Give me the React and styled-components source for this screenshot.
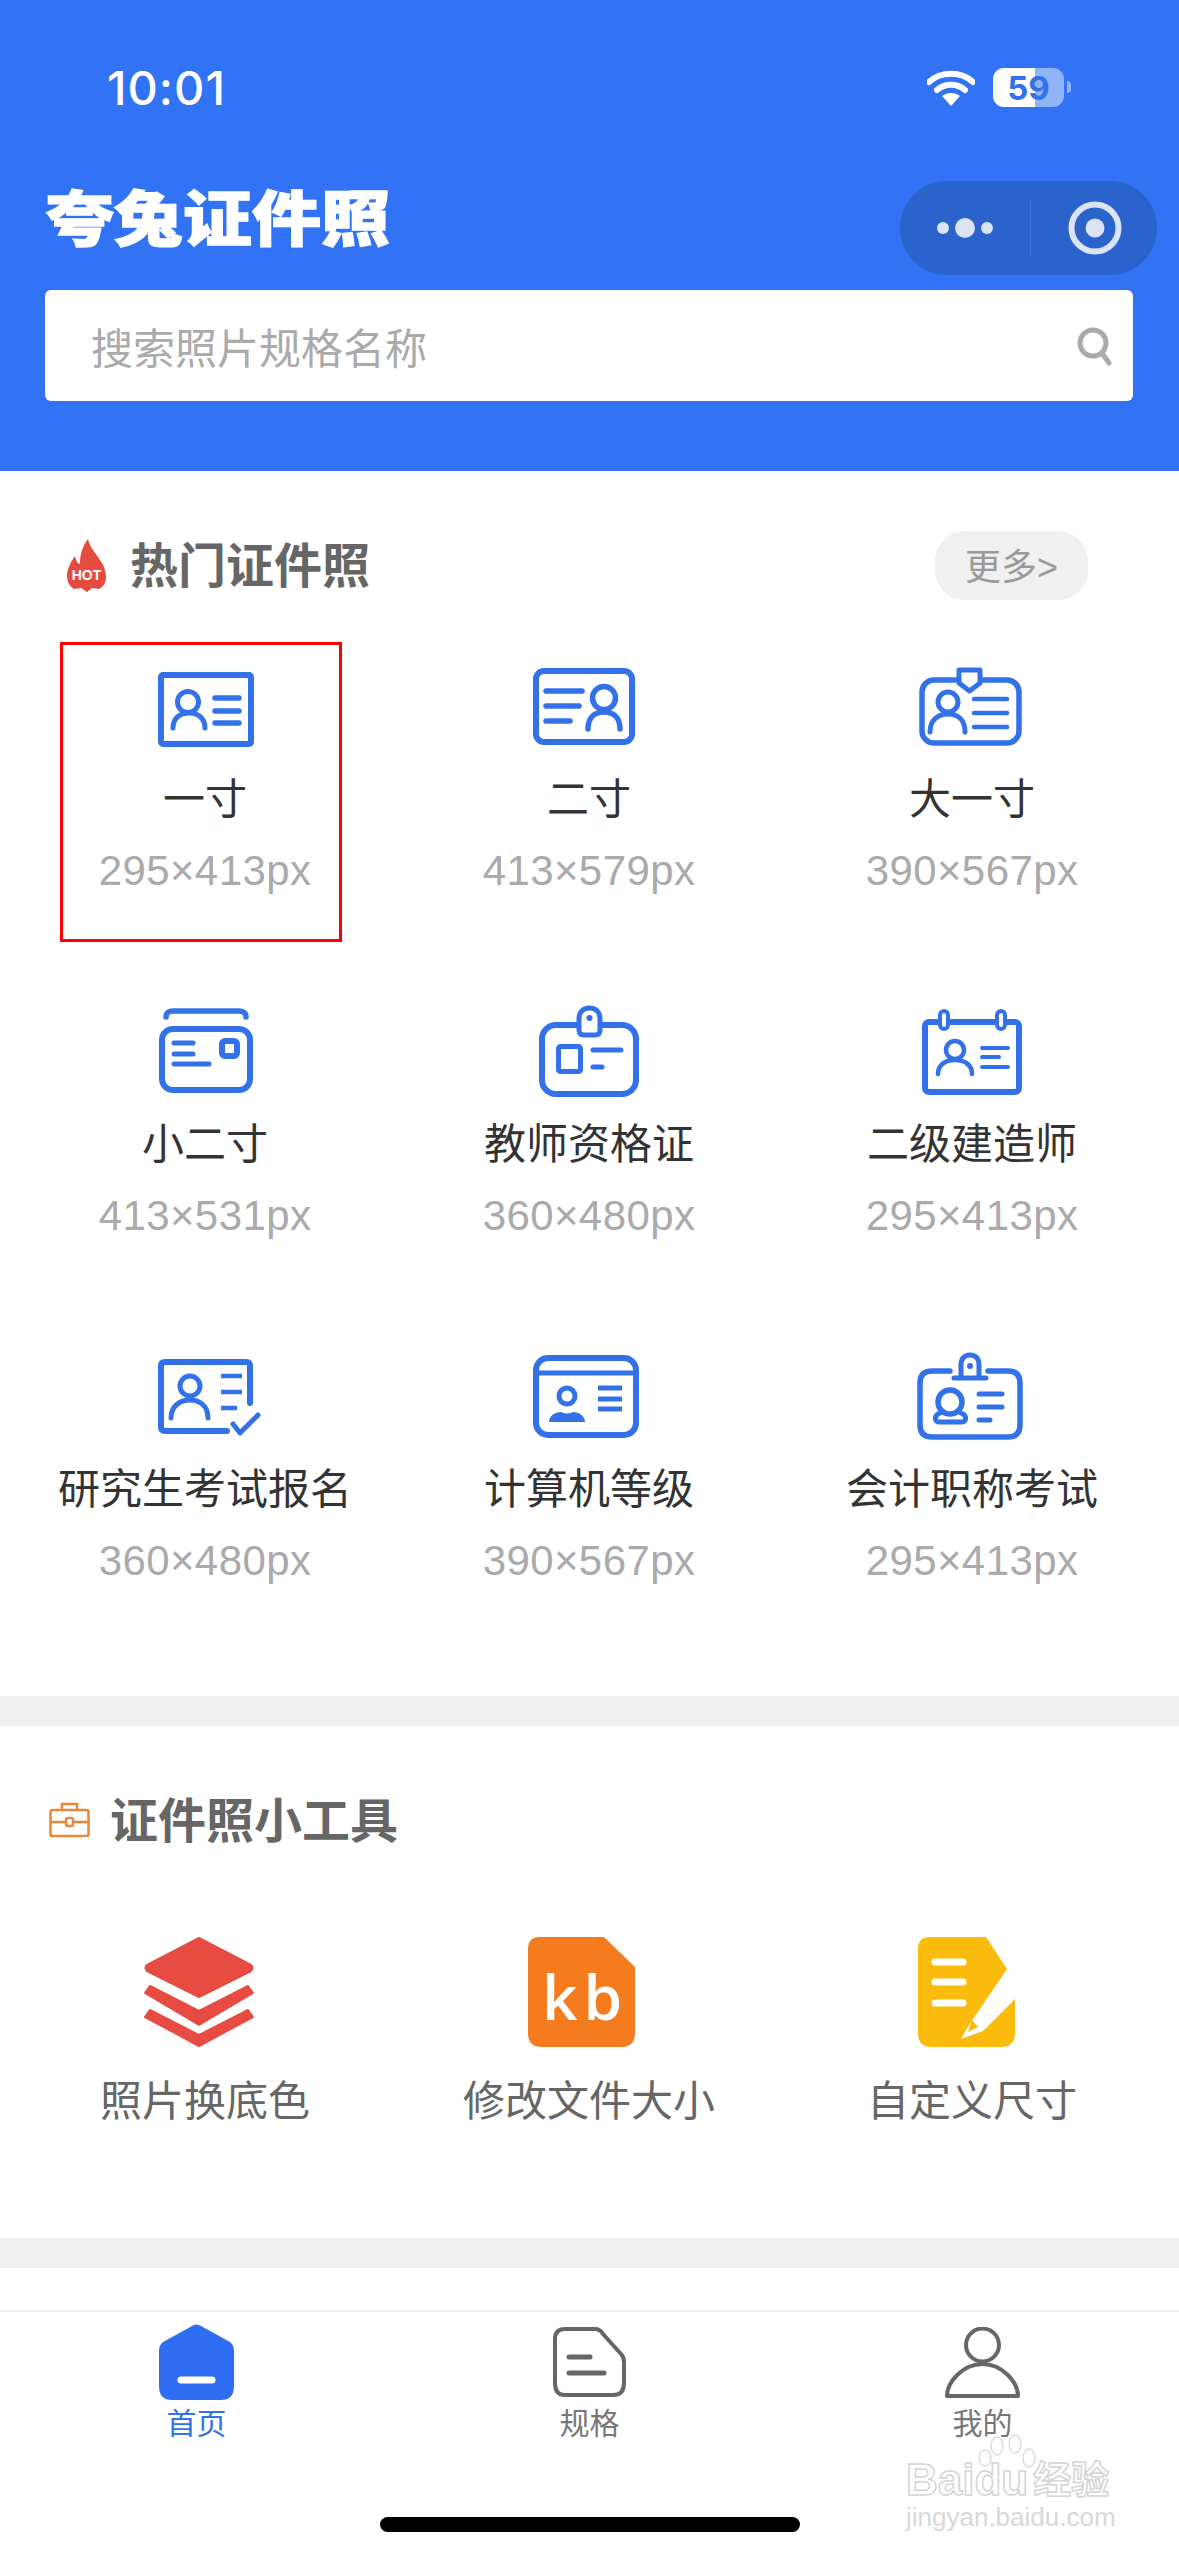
import React from 'react'
import styled, { createGlobalStyle } from 'styled-components'

const BLUE = '#3271e8'

const GlobalStyle = createGlobalStyle`
  html, body {
    margin: 0;
    padding: 0;
    background: #fff;
    font-family: "Liberation Sans", "Noto Sans CJK SC", sans-serif;
  }
`

const Page = styled.div`
  position: relative;
  width: 1179px;
  height: 2556px;
  overflow: hidden;
  background: #fff;
  display: flex;
  flex-direction: column;
`

const Header = styled.header`
  height: 471px;
  flex: none;
  background: #3273f5;
  box-sizing: border-box;
`

const StatusBar = styled.div`
  height: 181px;
  box-sizing: border-box;
  padding: 56px 115px 0 107px;
  display: flex;
  justify-content: space-between;
  align-items: flex-start;
`

const Time = styled.span`
  font-family: Inter, sans-serif;
  font-size: 47px;
  line-height: 64px;
  font-weight: 500;
  letter-spacing: 1px;
  color: #fff;
`

const StatusIcons = styled.div`
  display: flex;
  align-items: center;
  gap: 18px;
  padding-top: 12px;
`

const Battery = styled.div`
  position: relative;
  width: 71px;
  height: 39px;
  border-radius: 11px;
  background: linear-gradient(90deg, #fff 0 42px, #8fb4f8 42px 71px);
  display: flex;
  align-items: center;
  justify-content: center;
  font-family: Inter, sans-serif;
  font-weight: 700;
  font-size: 33px;
  color: ${BLUE};

  &::after {
    content: '';
    position: absolute;
    right: -7px;
    top: 13px;
    width: 4px;
    height: 12px;
    border-radius: 0 6px 6px 0;
    background: #8fb4f8;
  }
`

const TitleRow = styled.div`
  height: 94px;
  display: flex;
  justify-content: space-between;
  align-items: center;
  padding: 0 22px 0 45px;
`

const AppTitle = styled.h1`
  margin: 0 0 14px;
  font-size: 69px;
  line-height: 80px;
  font-weight: 900;
  color: #fff;
  -webkit-text-stroke: 1.5px #fff;
  transform: scaleY(0.88);
`

const Capsule = styled.div`
  width: 257px;
  height: 94px;
  border-radius: 47px;
  background: #2a63cc;
  display: flex;
  align-items: center;
`

const CapsuleSide = styled.div`
  flex: 1;
  height: 56px;
  display: flex;
  align-items: center;
  justify-content: center;
  padding-left: ${({ $shift }) => $shift}px;
  border-left: ${({ $divided }) => ($divided ? '1px solid #3d74d6' : 'none')};
`

const SearchBox = styled.div`
  height: 111px;
  margin: 15px 46px 0 45px;
  padding: 0 20px 0 46px;
  box-sizing: border-box;
  background: #fff;
  border-radius: 6px;
  display: flex;
  align-items: center;
  justify-content: space-between;
`

const Placeholder = styled.span`
  font-size: 42px;
  color: #aaa;
`

const Section = styled.section`
  flex: none;
  background: #fff;
  box-sizing: border-box;
  height: ${({ $height }) => $height}px;
  padding-top: ${({ $top }) => $top}px;
`

const SectionHead = styled.div`
  height: ${({ $tall }) => ($tall ? 69 : 60)}px;
  display: flex;
  align-items: center;
  justify-content: space-between;
  padding: 0 91px 0 ${({ $inset }) => $inset}px;
`

const SectionTitle = styled.div`
  display: flex;
  align-items: center;
  gap: ${({ $gap }) => $gap}px;
`

const TitleText = styled.span`
  margin-bottom: 7px;
  font-size: 48px;
  font-weight: 700;
  color: #666;
`

const MoreButton = styled.div`
  width: 153px;
  height: 69px;
  padding-bottom: 3px;
  box-sizing: border-box;
  border-radius: 30px;
  background: #f0f0f0;
  display: flex;
  align-items: center;
  justify-content: center;
  font-size: 36px;
  color: #999;
`

const ThreeColumns = styled.div`
  display: grid;
  grid-template-columns: 384px 384px 382px;
  padding: 0 16px 0 13px;
`

const SizeGrid = styled(ThreeColumns)`
  grid-auto-rows: 345px;
  margin-top: 57px;
`

const SizeCell = styled.div`
  position: relative;
  display: flex;
  flex-direction: column;
  align-items: center;
`

const Marker = styled.div`
  position: absolute;
  left: 47px;
  top: -15px;
  width: 282px;
  height: 300px;
  box-sizing: border-box;
  border: 3px solid #f00;
`

const IconSlot = styled.svg`
  display: block;
  flex: none;
  width: 120px;
  height: 100px;
  fill: none;
  stroke: ${BLUE};
  stroke-linecap: round;
  stroke-linejoin: round;
`

const CellName = styled.div`
  margin-top: 13px;
  font-size: 42px;
  line-height: 60px;
  color: #333;
  white-space: nowrap;
`

const CellSize = styled.div`
  margin-top: 16px;
  font-size: 42px;
  line-height: 50px;
  letter-spacing: 0.4px;
  color: #aaa;
  white-space: nowrap;
`

const Gap = styled.div`
  flex: none;
  height: 30px;
  background: #f0f0f0;
`

const ToolRow = styled(ThreeColumns)`
  margin-top: 87px;
`

const Tool = styled.div`
  display: flex;
  flex-direction: column;
  align-items: center;
`

const ToolSlot = styled.svg`
  display: block;
  width: 130px;
  height: 110px;
  overflow: visible;
`

const ToolName = styled.div`
  margin-top: 25px;
  font-size: 42px;
  line-height: 60px;
  color: #666;
  white-space: nowrap;
`

const Spacer = styled.div`
  flex: none;
  height: 42px;
`

const TabBar = styled.nav`
  flex: 1;
  border-top: 2px solid #eee;
  display: flex;
  align-items: flex-start;
`

const TabItem = styled.div`
  flex: 1;
  padding-top: 12px;
  display: flex;
  flex-direction: column;
  align-items: center;
`

const TabSlot = styled.div`
  height: 76px;
  display: flex;
  align-items: center;
  justify-content: center;
`

const TabLabel = styled.div`
  margin-top: 4px;
  font-size: 30px;
  line-height: 40px;
  color: ${({ $active }) => ($active ? BLUE : '#777')};
`

const HomeBar = styled.div`
  position: absolute;
  left: 380px;
  bottom: 24px;
  width: 420px;
  height: 15px;
  border-radius: 8px;
  background: #000;
`

const Watermark = styled.div`
  position: absolute;
  left: 906px;
  top: 2432px;
  width: 212px;
  height: 100px;
`

const WatermarkPaw = styled.svg`
  position: absolute;
  left: 71px;
  top: 0;
`

const WatermarkLogo = styled.div`
  position: absolute;
  left: 0;
  top: 26px;
  display: flex;
  align-items: center;
  gap: 5px;
  font-size: 44px;
  line-height: 44px;
  font-weight: 700;
  color: #fff;
  -webkit-text-stroke: 1.5px #d4d4d4;
  white-space: nowrap;
`

const WatermarkCn = styled.span`
  font-size: 38px;
`

const WatermarkUrl = styled.div`
  position: absolute;
  left: 0;
  top: 70px;
  font-size: 26px;
  line-height: 30px;
  color: #d8d8d8;
  white-space: nowrap;
`

const Line = ({ x1, x2, y, w }) => <line x1={x1} x2={x2} y1={y} y2={y} strokeWidth={w} />

const OneInch = () => (
  <IconSlot viewBox="0 0 120 100">
    <rect x="16" y="18" width="90" height="69" rx="2" strokeWidth="6" />
    <circle cx="43" cy="45" r="10.5" strokeWidth="5" />
    <path d="M28 71C28 61 35 56 44 56S60 61 60 71" strokeWidth="5" />
    <Line x1="70" x2="94" y="41" w="5.5" />
    <Line x1="70" x2="94" y="54" w="5.5" />
    <Line x1="70" x2="94" y="66" w="5.5" />
  </IconSlot>
)

const TwoInch = () => (
  <IconSlot viewBox="0 0 120 100">
    <rect x="7" y="14" width="96" height="71" rx="8" strokeWidth="6" />
    <Line x1="17" x2="53" y="34" w="5.5" />
    <Line x1="17" x2="50" y="49" w="5.5" />
    <Line x1="17" x2="41" y="64" w="5.5" />
    <circle cx="75" cy="41" r="11.5" strokeWidth="5.5" />
    <path d="M59 72C59 60 66 55 75 55S91 60 91 72" strokeWidth="5.5" />
  </IconSlot>
)

const BigOneInch = () => (
  <IconSlot viewBox="0 0 120 100">
    <rect x="10" y="23" width="97" height="63" rx="12" strokeWidth="5.5" />
    <path d="M47 13H68V26L57.5 34L47 26Z" fill="#fff" strokeWidth="5" />
    <circle cx="36" cy="45" r="10" strokeWidth="5" />
    <path d="M18 75C18 63 26 57 36 57S53 63 53 75" strokeWidth="5" />
    <Line x1="62" x2="95" y="42" w="4.5" />
    <Line x1="62" x2="95" y="56" w="4.5" />
    <Line x1="62" x2="95" y="70" w="4.5" />
  </IconSlot>
)

const SmallTwoInch = () => (
  <IconSlot viewBox="0 0 120 100">
    <path d="M21 15C21 11 24 9 28 9H94C98 9 101 11 101 15" strokeWidth="5.5" />
    <rect x="17" y="27" width="88" height="61" rx="11" strokeWidth="6" />
    <Line x1="29" x2="48" y="41" w="5" />
    <Line x1="29" x2="48" y="52" w="5" />
    <Line x1="29" x2="64" y="62" w="5" />
    <rect x="77" y="39" width="15" height="15" rx="3" strokeWidth="6" />
  </IconSlot>
)

const Teacher = () => (
  <IconSlot viewBox="0 0 120 100">
    <rect x="13" y="23" width="94" height="69" rx="14" strokeWidth="6" />
    <path d="M50 17C50 10 54 6 60.5 6S71 10 71 17V28Q71 33 66 33H55Q50 33 50 28Z" fill="#fff" strokeWidth="5" />
    <circle cx="60.5" cy="16" r="3" fill={BLUE} stroke="none" />
    <rect x="29.5" y="44.5" width="22" height="25" rx="2" strokeWidth="5" />
    <Line x1="64" x2="92" y="48" w="5" />
    <Line x1="64" x2="73" y="65" w="5" />
  </IconSlot>
)

const Builder = () => (
  <IconSlot viewBox="0 0 120 100">
    <rect x="13" y="20" width="94" height="70" rx="4" strokeWidth="6" />
    <rect x="28" y="9" width="8" height="18" rx="4" fill="#fff" strokeWidth="4" />
    <rect x="85" y="9" width="8" height="18" rx="4" fill="#fff" strokeWidth="4" />
    <circle cx="43" cy="48" r="9" strokeWidth="4.5" />
    <path d="M26 72C26 63 33 58 43 58S60 63 60 72" strokeWidth="4.5" />
    <Line x1="70" x2="96" y="46" w="4" />
    <Line x1="70" x2="87" y="55" w="4" />
    <Line x1="70" x2="96" y="65" w="4" />
  </IconSlot>
)

const Graduate = () => (
  <IconSlot viewBox="0 0 120 100">
    <path d="M105 56V19Q105 15 101 15H20Q16 15 16 19V80Q16 84 20 84H82" strokeWidth="6" />
    <circle cx="45" cy="39" r="10" strokeWidth="5" />
    <path d="M26 71C26 59 35 53 45 53S63 59 63 71" strokeWidth="5" />
    <line x1="76" x2="97" y1="29" y2="29" strokeWidth="4.5" strokeLinecap="butt" />
    <line x1="76" x2="97" y1="45" y2="45" strokeWidth="4.5" strokeLinecap="butt" />
    <line x1="76" x2="92" y1="61" y2="61" strokeWidth="4.5" strokeLinecap="butt" />
    <path d="M88 77L95 86L113 68" strokeWidth="5" />
  </IconSlot>
)

const Computer = () => (
  <IconSlot viewBox="0 0 120 100">
    <rect x="7" y="11" width="100" height="77" rx="12" strokeWidth="6" />
    <line x1="7" x2="107" y1="26" y2="26" strokeWidth="5" />
    <circle cx="38" cy="49" r="8" strokeWidth="5" />
    <path d="M20 75C20 69 26 65 32 65Q38 68 44 65C50 65 56 69 56 75Z" fill={BLUE} stroke="none" />
    <line x1="69" x2="93" y1="41" y2="41" strokeWidth="5" strokeLinecap="butt" />
    <line x1="69" x2="93" y1="52" y2="52" strokeWidth="5" strokeLinecap="butt" />
    <line x1="69" x2="93" y1="62" y2="62" strokeWidth="5" strokeLinecap="butt" />
  </IconSlot>
)

const Accountant = () => (
  <IconSlot viewBox="0 0 120 100">
    <path d="M38 24H20Q8 24 8 36V78Q8 90 20 90H96Q108 90 108 78V36Q108 24 96 24H76" strokeWidth="5.5" />
    <path d="M49 30V18C49 12 52 8 58 8S67 12 67 18V30" strokeWidth="5" />
    <Line x1="42" x2="74" y="31" w="5" />
    <circle cx="58" cy="19" r="3" fill={BLUE} stroke="none" />
    <circle cx="38" cy="55" r="12" strokeWidth="5.5" />
    <path d="M28 66C22 68 22 75 27 75H50C55 75 55 68 49 66" strokeWidth="5" />
    <Line x1="67" x2="90" y="47" w="5" />
    <Line x1="67" x2="90" y="60" w="5" />
    <Line x1="67" x2="78" y="73" w="5" />
  </IconSlot>
)

const sizes = [
  { name: '一寸', size: '295×413px', Icon: OneInch, marked: true },
  { name: '二寸', size: '413×579px', Icon: TwoInch },
  { name: '大一寸', size: '390×567px', Icon: BigOneInch },
  { name: '小二寸', size: '413×531px', Icon: SmallTwoInch },
  { name: '教师资格证', size: '360×480px', Icon: Teacher },
  { name: '二级建造师', size: '295×413px', Icon: Builder },
  { name: '研究生考试报名', size: '360×480px', Icon: Graduate },
  { name: '计算机等级', size: '390×567px', Icon: Computer },
  { name: '会计职称考试', size: '295×413px', Icon: Accountant },
]

const Layers = () => (
  <ToolSlot viewBox="0 0 130 110">
    <g fill="#e64c42" stroke="#e64c42" strokeWidth="2" strokeLinejoin="round">
      <path d="M59 1L111 28Q114 31 111 34L59 60L7 34Q4 31 7 28Z" />
      <path d="M5 56L10 49L59 74L108 49L113 56L59 88Z" />
      <path d="M5 80L10 73L59 98L108 73L113 80L59 109Z" />
    </g>
  </ToolSlot>
)

const KbFile = () => (
  <ToolSlot viewBox="0 0 130 110">
    <path d="M16 0H80L111 30V96Q111 110 97 110H18Q4 110 4 96V12Q4 0 16 0Z" fill="#f47b1e" />
    <text x="18" y="83" fontFamily="'Open Sans', sans-serif" fontWeight="600" fontSize="62" letterSpacing="6" fill="#fff">kb</text>
  </ToolSlot>
)

const CustomSize = () => (
  <ToolSlot viewBox="0 0 130 110">
    <path d="M23 0H79L100 32L62 88L54 102L76 94L108 62V96Q108 110 94 110H25Q11 110 11 96V12Q11 0 23 0Z" fill="#fbbb0c" />
    <path d="M61 95L65 83L71 90Z" fill="#fbbb0c" />
    <g stroke="#fff" strokeWidth="7" strokeLinecap="round">
      <line x1="28" x2="56" y1="25" y2="25" />
      <line x1="28" x2="56" y1="45" y2="45" />
      <line x1="28" x2="56" y1="66" y2="66" />
    </g>
  </ToolSlot>
)

const tools = [
  { name: '照片换底色', Icon: Layers },
  { name: '修改文件大小', Icon: KbFile },
  { name: '自定义尺寸', Icon: CustomSize },
]

export default function App() {
  return (
    <Page>
      <GlobalStyle />
      <Header>
        <StatusBar>
          <Time>10:01</Time>
          <StatusIcons>
            <svg width="48" height="36" viewBox="0 0 48 36">
              <path d="M2 12C14 1 34 1 46 12" fill="none" stroke="#fff" strokeWidth="6" strokeLinecap="round" />
              <path d="M10 20C18 13 30 13 38 20" fill="none" stroke="#fff" strokeWidth="6" strokeLinecap="round" />
              <path d="M15 26C20 22 28 22 33 26L24 36Z" fill="#fff" />
            </svg>
            <Battery>59</Battery>
          </StatusIcons>
        </StatusBar>
        <TitleRow>
          <AppTitle>夸兔证件照</AppTitle>
          <Capsule>
            <CapsuleSide $shift={5}>
              <svg width="64" height="24" viewBox="0 0 64 24" fill="#dbe3f5">
                <circle cx="8" cy="12" r="6" />
                <circle cx="30" cy="12" r="10" />
                <circle cx="52" cy="12" r="6" />
              </svg>
            </CapsuleSide>
            <CapsuleSide $divided $shift={2}>
              <svg width="54" height="54" viewBox="0 0 54 54">
                <circle cx="27" cy="27" r="23.5" fill="none" stroke="#dbe3f5" strokeWidth="6" />
                <circle cx="27" cy="27" r="9.5" fill="#dbe3f5" />
              </svg>
            </CapsuleSide>
          </Capsule>
        </TitleRow>
        <SearchBox>
          <Placeholder>搜索照片规格名称</Placeholder>
          <svg width="38" height="40" viewBox="0 0 38 40" fill="none" stroke="#aaa" strokeWidth="5" strokeLinecap="round">
            <circle cx="18" cy="17" r="13" />
            <path d="M27 27L34 37" />
          </svg>
        </SearchBox>
      </Header>

      <Section $height={1225} $top={60}>
        <SectionHead $tall $inset={66}>
          <SectionTitle $gap={23}>
            <svg width="41" height="53" viewBox="0 0 41 53">
              <path d="M22 0C24 10 32 16 37 26C42 36 41 46 33 50L26 49L21 53L15 49L8 50C1 46 -1 36 3 28C5 22 7 20 9 17C10 22 12 25 14 25C14 16 16 8 22 0Z" fill="#e54b3f" />
              <text x="20.5" y="41" textAnchor="middle" fontFamily="'Liberation Sans', sans-serif" fontWeight="700" fontSize="14" fill="#fff">HOT</text>
            </svg>
            <TitleText>热门证件照</TitleText>
          </SectionTitle>
          <MoreButton>更多&gt;</MoreButton>
        </SectionHead>
        <SizeGrid>
          {sizes.map(({ name, size, Icon, marked }) => (
            <SizeCell key={name}>
              <Icon />
              <CellName>{name}</CellName>
              <CellSize>{size}</CellSize>
              {marked && <Marker />}
            </SizeCell>
          ))}
        </SizeGrid>
      </Section>

      <Gap />

      <Section $height={512} $top={64}>
        <SectionHead $inset={49}>
          <SectionTitle $gap={20}>
            <svg width="41" height="36" viewBox="0 0 41 36" fill="none" stroke="#e8873a" strokeWidth="2.5">
              <rect x="1.5" y="8" width="38" height="26" rx="2" />
              <path d="M13 8V2H28V8" />
              <path d="M1.5 20H17M24 20H39.5" />
              <rect x="17" y="16" width="7" height="8" rx="2" />
            </svg>
            <TitleText>证件照小工具</TitleText>
          </SectionTitle>
        </SectionHead>
        <ToolRow>
          {tools.map(({ name, Icon }) => (
            <Tool key={name}>
              <Icon />
              <ToolName>{name}</ToolName>
            </Tool>
          ))}
        </ToolRow>
      </Section>

      <Gap />
      <Spacer />

      <TabBar>
        <TabItem>
          <TabSlot>
            <svg width="75" height="76" viewBox="0 0 75 76">
              <path d="M33 2Q37.5 -1 42 2L71 18Q75 21 75 27V62Q75 76 62 76H13Q0 76 0 62V27Q0 21 4 18Z" fill="#2f6df2" />
              <line x1="22" x2="53" y1="56" y2="56" stroke="#fff" strokeWidth="7" strokeLinecap="round" />
            </svg>
          </TabSlot>
          <TabLabel $active>首页</TabLabel>
        </TabItem>
        <TabItem>
          <TabSlot>
            <svg width="73" height="70" viewBox="0 0 73 70" fill="none" stroke="#666" strokeLinecap="round" strokeLinejoin="round">
              <path d="M12 2H42Q47 2 50 7L68 27Q71 30 71 35V56Q71 68 60 68H12Q2 68 2 56V12Q2 2 12 2Z" strokeWidth="4" />
              <line x1="16" x2="37" y1="30" y2="30" strokeWidth="5" />
              <line x1="16" x2="51" y1="46" y2="46" strokeWidth="5" />
            </svg>
          </TabSlot>
          <TabLabel>规格</TabLabel>
        </TabItem>
        <TabItem>
          <TabSlot>
            <svg width="75" height="71" viewBox="0 0 75 71" fill="none" stroke="#666" strokeWidth="4" strokeLinejoin="round">
              <circle cx="37.5" cy="18" r="16.5" />
              <path d="M37.5 37C18 37 2 55 2 69H73C73 55 57 37 37.5 37Z" />
            </svg>
          </TabSlot>
          <TabLabel>我的</TabLabel>
        </TabItem>
      </TabBar>

      <Watermark>
        <WatermarkPaw width="62" height="66" viewBox="0 0 62 66" fill="#fff" stroke="#dcdcdc" strokeWidth="1.5">
          <ellipse cx="20" cy="14" rx="6" ry="9" />
          <ellipse cx="38" cy="12" rx="6" ry="9" />
          <ellipse cx="52" cy="26" rx="6" ry="9" />
          <ellipse cx="8" cy="26" rx="6" ry="8" />
        </WatermarkPaw>
        <WatermarkLogo>
          Baidu
          <WatermarkCn>经验</WatermarkCn>
        </WatermarkLogo>
        <WatermarkUrl>jingyan.baidu.com</WatermarkUrl>
      </Watermark>
      <HomeBar />
    </Page>
  )
}
